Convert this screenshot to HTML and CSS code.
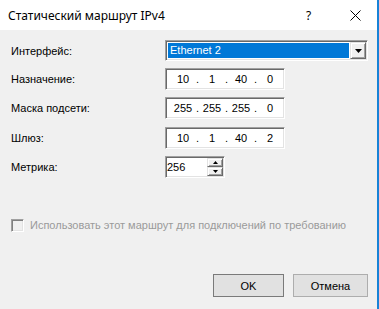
FILE: index.html
```html
<!DOCTYPE html>
<html>
<head>
<meta charset="utf-8">
<link rel="stylesheet" href="styles.css">
</head>
<body>
<div class="window">
  <div class="titlebar">
    <span class="title">Статический маршрут IPv4</span>
    <span class="help">?</span>
    <span class="close"><svg width="11" height="11" viewBox="0 0 11 11"><path d="M0.5 0.5L10.5 10.5M10.5 0.5L0.5 10.5" stroke="#000" stroke-width="1" fill="none"/></svg></span>
  </div>
  <div class="content">
    <div class="form">
      <span class="lbl">Интерфейс:</span>
      <div class="field combo sunken">
        <span class="selection">Ethernet 2</span>
        <span class="dropbtn raised"><svg width="7" height="4" viewBox="0 0 7 4"><path d="M0 0H7L3.5 4Z" fill="#000"/></svg></span>
      </div>

      <span class="lbl">Назначение:</span>
      <div class="field ip sunken">
        <span class="oct">10</span><span class="dot">.</span><span class="oct">1</span><span class="dot">.</span><span class="oct">40</span><span class="dot">.</span><span class="oct">0</span>
      </div>

      <span class="lbl">Маска подсети:</span>
      <div class="field ip sunken">
        <span class="oct">255</span><span class="dot">.</span><span class="oct">255</span><span class="dot">.</span><span class="oct">255</span><span class="dot">.</span><span class="oct">0</span>
      </div>

      <span class="lbl">Шлюз:</span>
      <div class="field ip sunken">
        <span class="oct">10</span><span class="dot">.</span><span class="oct">1</span><span class="dot">.</span><span class="oct">40</span><span class="dot">.</span><span class="oct">2</span>
      </div>

      <span class="lbl">Метрика:</span>
      <div class="field metric sunken">
        <span class="metric-val">256</span>
        <span class="spin">
          <span class="spinbtn raised"><svg width="5" height="3" viewBox="0 0 5 3"><path d="M2.5 0L5 3H0Z" fill="#000"/></svg></span>
          <span class="spinbtn raised"><svg width="5" height="3" viewBox="0 0 5 3"><path d="M0 0H5L2.5 3Z" fill="#000"/></svg></span>
        </span>
      </div>
    </div>

    <div class="check-row">
      <span class="checkbox"></span>
      <span class="check-label">Использовать этот маршрут для подключений по требованию</span>
    </div>

    <div class="buttons">
      <span class="btn btn-default">OK</span>
      <span class="btn btn-cancel">Отмена</span>
    </div>
  </div>
</div>
</body>
</html>
```

FILE: styles.css
```css
* { box-sizing: border-box; }
html, body { margin: 0; padding: 0; }
body { width: 379px; height: 309px; overflow: hidden; background: #f0f0f0; }

.window {
  width: 379px;
  height: 309px;
  background: #f0f0f0;
  border-right: 2px solid #1883d7;
  display: flex;
  flex-direction: column;
  font-family: "Liberation Sans", Arial, sans-serif;
  font-size: 11px;
  color: #000;
}

.titlebar {
  height: 30px;
  background: #fff;
  display: flex;
  align-items: center;
  padding-left: 8px;
  font-family: "Noto Sans", "Open Sans", sans-serif;
  font-size: 12px;
}
.title { flex: 1; }
.help { width: 7px; margin-right: 37px; }
.close { width: 11px; height: 11px; margin-right: 16px; display: flex; margin-top: 1px; }

.content {
  flex: 1;
  display: flex;
  flex-direction: column;
  padding: 10px 9px 12px 11px;
}

.form {
  display: grid;
  grid-template-columns: 154px 1fr;
  grid-template-rows: 28px 29px 30px 29px 22px;
  align-items: start;
}
.lbl { line-height: 13px; padding-top: 5px; white-space: nowrap; }

.sunken {
  background: #fff;
  border: 1px solid;
  border-color: #a0a0a0 #fff #fff #a0a0a0;
  box-shadow: inset 1px 1px #696969, inset -1px -1px #e3e3e3;
}
.raised {
  background: #f0f0f0;
  border: 1px solid;
  border-color: #e3e3e3 #696969 #696969 #e3e3e3;
  box-shadow: inset 1px 1px #fff, inset -1px -1px #a0a0a0;
}

.combo {
  width: 203px;
  height: 21px;
  padding: 1px;
  display: flex;
}
.selection {
  flex: 1;
  margin: 1px;
  background: #0078d7;
  color: #fff;
  padding-left: 2px;
  line-height: 15px;
  white-space: nowrap;
}
.dropbtn {
  width: 16px;
  display: flex;
  align-items: center;
  justify-content: center;
}

.ip {
  width: 120px;
  height: 22px;
  padding: 1px 0 1px 5px;
  display: flex;
  align-items: center;
  line-height: 18px;
}
.oct { width: 24px; text-align: center; }
.dot { width: 5px; text-align: center; }

.metric {
  width: 60px;
  height: 22px;
  padding: 1px;
  display: flex;
}
.metric-val { flex: 1; line-height: 18px; }
.spin { width: 16px; display: flex; flex-direction: column; }
.spinbtn {
  height: 9px;
  display: flex;
  align-items: center;
  justify-content: center;
}

.check-row {
  margin-top: 41px;
  height: 13px;
  display: flex;
  align-items: center;
}
.checkbox {
  width: 13px;
  height: 13px;
  background: #f0f0f0;
  border: 1px solid;
  border-color: #a0a0a0 #fff #fff #a0a0a0;
  box-shadow: inset 1px 1px #808080, inset -1px -1px #e3e3e3;
}
.check-label {
  margin-left: 6px;
  color: #9a9a9a;
  white-space: nowrap;
  line-height: 13px;
}

.buttons {
  margin-top: auto;
  display: flex;
  justify-content: flex-end;
  gap: 9px;
}
.btn {
  height: 23px;
  background: #e1e1e1;
  border: 1px solid #adadad;
  display: flex;
  align-items: center;
  justify-content: center;
}
.btn-default { width: 71px; border-color: #7a7a7a; }
.btn-cancel { width: 75px; }
```
